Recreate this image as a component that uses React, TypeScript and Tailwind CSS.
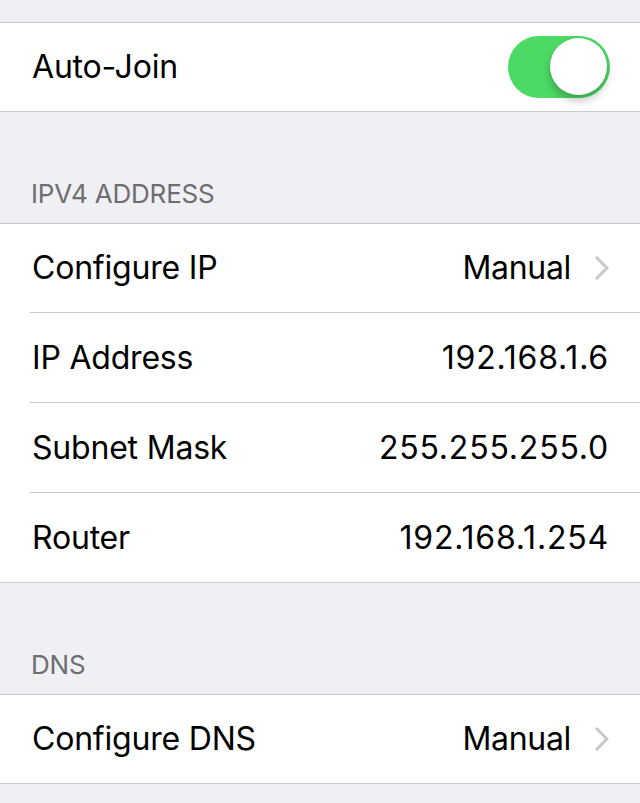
import React from 'react';

const font = { fontFamily: 'Inter, "Noto Sans", sans-serif' };

const Chevron = () => (
  <svg width="14" height="24" viewBox="0 0 14 24" className="ml-[24px] shrink-0">
    <path d="M2 2 L12 12 L2 22" fill="none" stroke="#c7c7cc" strokeWidth="3" strokeLinecap="square" />
  </svg>
);

const Toggle = () => (
  <div className="relative w-[102px] h-[62px] rounded-full bg-[#4cd964]">
    <div className="absolute right-[3px] top-[2px] w-[57px] h-[57px] rounded-full bg-white shadow-[0_6px_8px_rgba(0,0,0,0.22),0_0_0_1px_rgba(0,0,0,0.04)]" />
  </div>
);

type RowProps = { label: string; value?: string; chevron?: boolean; h: string; last?: boolean };

const Row = ({ label, value, chevron, h, last }: RowProps) => (
  <div className="pl-[30px] bg-white">
    <div className={`flex items-center justify-between pr-[31px] ${h} ${last ? '' : 'border-b border-[#c8c7cc]'}`}>
      <span className="pl-[2px] text-[32px] text-black tracking-[-0.2px]">{label}</span>
      <div className="flex items-center">
        {value && (
          <span className={`text-[32px] text-black ${chevron ? 'tracking-[-0.3px]' : 'tracking-[0.8px]'}`}>{value}</span>
        )}
        {chevron && <Chevron />}
      </div>
    </div>
  </div>
);

const Group = ({ children }: { children: React.ReactNode }) => (
  <div className="border-y border-[#c8c7cc] bg-white">{children}</div>
);

const Header = ({ title }: { title: string }) => (
  <div className="h-[111px] flex items-end pl-[31px] pb-[10px]">
    <span className="text-[26px] text-[#6d6d72] tracking-[-0.2px]">{title}</span>
  </div>
);

export default function App() {
  return (
    <div className="w-[640px] h-[803px] overflow-hidden bg-[#efeff4]" style={font}>
      <div className="h-[22px]" />
      <Group>
        <div className="h-[88px] pl-[32px] pr-[30px] flex items-center justify-between">
          <span className="text-[32px] text-black tracking-[-0.2px]">Auto-Join</span>
          <Toggle />
        </div>
      </Group>
      <Header title="IPV4 ADDRESS" />
      <Group>
        <Row label="Configure IP" value="Manual" chevron h="h-[89px]" />
        <Row label="IP Address" value="192.168.1.6" h="h-[90px]" />
        <Row label="Subnet Mask" value="255.255.255.0" h="h-[90px]" />
        <Row label="Router" value="192.168.1.254" h="h-[89px]" last />
      </Group>
      <Header title="DNS" />
      <Group>
        <Row label="Configure DNS" value="Manual" chevron h="h-[88px]" last />
      </Group>
    </div>
  );
}
